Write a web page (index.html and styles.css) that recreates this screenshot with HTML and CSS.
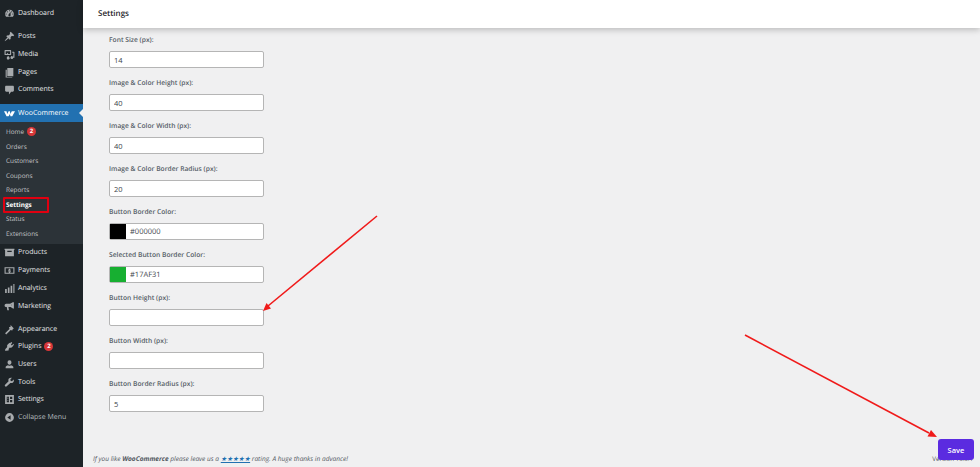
FILE: index.html

```html
<!DOCTYPE html>
<html lang="en">
<head>
  <meta charset="UTF-8" />
  <meta name="viewport" content="width=device-width, initial-scale=1.0"/>
  <title>Settings</title>
  <link rel="stylesheet" href="styles.css">
</head>
<body>
  <div class="wrap">
    <aside class="sidebar">
      <ul class="menu first">
        <li><svg viewBox="0 0 20 20"><path fill-rule="evenodd" d="M3.76 16h12.48c1.1-1.37 1.76-3.11 1.76-5 0-4.42-3.58-8-8-8s-8 3.58-8 8c0 1.89.66 3.63 1.76 5zM10 4c.55 0 1 .45 1 1s-.45 1-1 1-1-.45-1-1 .45-1 1-1zM6 6c.55 0 1 .45 1 1s-.45 1-1 1-1-.45-1-1 .45-1 1-1zm8 0c.55 0 1 .45 1 1s-.45 1-1 1-1-.45-1-1 .45-1 1-1zm-5.37 5.55L12 7v6c0 1.1-.9 2-2 2s-2-.9-2-2c0-.57.24-1.08.63-1.45zM4 10c.55 0 1 .45 1 1s-.45 1-1 1-1-.45-1-1 .45-1 1-1zm12 0c.55 0 1 .45 1 1s-.45 1-1 1-1-.45-1-1 .45-1 1-1z"/></svg>Dashboard</li>
      </ul>
      <ul class="menu">
        <li><svg viewBox="0 0 20 20"><path d="M10.44 3.02l1.82-1.82 6.36 6.35-1.83 1.82c-1.05-.68-2.48-.57-3.41.36l-.75.75c-.92.93-1.04 2.35-.35 3.41l-1.83 1.82-2.41-2.41-2.8 2.79c-.42.42-3.38 2.71-3.8 2.29s1.86-3.39 2.28-3.81l2.79-2.79L4.1 9.36l1.83-1.82c1.05.69 2.48.57 3.4-.36l.75-.75c.93-.92 1.05-2.35.36-3.41z"/></svg>Posts</li>
        <li><svg viewBox="0 0 20 20"><path fill-rule="evenodd" d="M2 2h10a1 1 0 0 1 1 1v7a1 1 0 0 1-1 1H2a1 1 0 0 1-1-1V3a1 1 0 0 1 1-1zm1 2v5h2l1-2 2 2h3V4H3zm12 1h3a1 1 0 0 1 1 1v10h-2.2a2.5 2.5 0 1 1-1-2.4H17V7h-2V5zM6 13h3v1.6a2.5 2.5 0 1 1-1.5-.4H6V13z"/></svg>Media</li>
        <li><svg viewBox="0 0 20 20"><path fill-rule="evenodd" d="M6 2h11v15H6V2zM3 5h2v13h10v1H3V5z"/></svg>Pages</li>
        <li><svg viewBox="0 0 20 20"><path d="M4 3h12c1.1 0 2 .9 2 2v7c0 1.1-.9 2-2 2h-3l-4 5v-5H4c-1.1 0-2-.9-2-2V5c0-1.1.9-2 2-2z"/></svg>Comments</li>
      </ul>
      <ul class="menu">
        <li class="active"><svg class="woo" viewBox="0 0 24 14"><path d="M0 2h5.500l1.500 6 3-6h3l1 6 3-6H24l-6 11h-4l-1-5-3 5H5.500z"/></svg>WooCommerce</li>
      </ul>
      <ul class="submenu">
        <li>Home <span class="badge">2</span></li>
        <li>Orders</li>
        <li>Customers</li>
        <li>Coupons</li>
        <li>Reports</li>
        <li class="current">Settings</li>
        <li>Status</li>
        <li>Extensions</li>
      </ul>
      <ul class="menu">
        <li><svg viewBox="0 0 20 20"><path fill-rule="evenodd" d="M1 3h18v2l-1 1v11H2V6L1 5V3zm5 4v2h8V7H6z"/></svg>Products</li>
        <li><svg viewBox="0 0 20 20"><path fill-rule="evenodd" d="M1 4h18v12H1V4zm2 2v8h14V6H3zm6 1h2v1h1v1H9.500v.5H12V13h-1v1H9v-1H8v-1h2.500v-.5H8V8h1V7z"/></svg>Payments</li>
        <li><svg viewBox="0 0 20 20"><path d="M2 11h3v7H2zM7 8h3v10H7zM12 5h3v13h-3zM17 2h2v16h-2z"/></svg>Analytics</li>
        <li><svg viewBox="0 0 20 20"><path fill-rule="evenodd" d="M17 2l1 1v10l-1 1-5-3H8l1 6H6l-1-6H4a3 3 0 0 1 0-6h7l6-3zm-3 4v3a2 2 0 0 0 0-3z"/></svg>Marketing</li>
      </ul>
      <ul class="menu">
        <li><svg viewBox="0 0 20 20"><path d="M12 2l6 6-2 1-1 3-3-1-2 2-6 6-2-2 6-6 2-2-1-3 3-1z"/></svg>Appearance</li>
        <li><svg viewBox="0 0 20 20"><path d="M13 2l2 1-2.500 4 2 1L17 5l1 2-3 4c-1 1.500-3 1.800-4.500 1L8 15l1 1-2 2-1-1c-1 .8-2 1-3 1l-1-1c0-1 .2-2 1-3l3-3c-.8-1.500-.5-3.500.8-4.500L10 3l1 1z"/></svg>Plugins <span class="badge">2</span></li>
        <li><svg viewBox="0 0 20 20"><path d="M10 2.500a3.600 3.600 0 0 1 3.600 3.800c0 2.200-1.500 4-3.600 4s-3.600-1.800-3.600-4A3.600 3.600 0 0 1 10 2.500zM3 14.500c0-1.500 2.500-2.800 4.500-3.300.7.700 1.600 1 2.500 1s1.800-.3 2.500-1c2 .5 4.500 1.800 4.500 3.300V17H3v-2.500z"/></svg>Users</li>
        <li><svg viewBox="0 0 20 20"><path d="M17.500 4.500l-3 3-2.500-.5-.5-2.500 3-3c-2-.7-4.200-.2-5.500 1.200C8 3.600 7.600 5.700 8.300 7.500L2 14c-.8.800-.8 2.200 0 3s2.200.8 3 0l6.500-6.300c1.800.7 3.900.3 5.300-1.200 1.400-1.300 1.400-3.500.7-5z"/></svg>Tools</li>
        <li><svg viewBox="0 0 20 20"><path fill-rule="evenodd" d="M2 2h16v16H2V2zm3 3v10h4V5H5zm6 0v4h4V5h-4zm0 6v4h4v-4h-4zM6 7h2v1H6V7zm0 4h2v1H6v-1z"/></svg>Settings</li>
        <li class="collapse"><svg viewBox="0 0 20 20"><path fill-rule="evenodd" d="M10 2a8 8 0 1 1 0 16 8 8 0 0 1 0-16zm2 4l-6 4 6 4V6z"/></svg>Collapse Menu</li>
      </ul>
    </aside>

    <div class="main">
      <header class="topbar">Settings</header>
      <form class="form">
        <div class="field">
          <label>Font Size (px):</label>
          <input type="text" value="14">
        </div>
        <div class="field">
          <label>Image &amp; Color Height (px):</label>
          <input type="text" value="40">
        </div>
        <div class="field">
          <label>Image &amp; Color Width (px):</label>
          <input type="text" value="40">
        </div>
        <div class="field">
          <label>Image &amp; Color Border Radius (px):</label>
          <input type="text" value="20">
        </div>
        <div class="field">
          <label>Button Border Color:</label>
          <div class="color-input"><span class="swatch black"></span>#000000</div>
        </div>
        <div class="field">
          <label>Selected Button Border Color:</label>
          <div class="color-input"><span class="swatch green"></span>#17AF31</div>
        </div>
        <div class="field">
          <label>Button Height (px):</label>
          <input type="text">
        </div>
        <div class="field">
          <label>Button Width (px):</label>
          <input type="text">
        </div>
        <div class="field">
          <label>Button Border Radius (px):</label>
          <input type="text" value="5">
        </div>
      </form>
      <footer class="footer">
        <span>If you like <strong>WooCommerce</strong> please leave us a <a href="#">★★★★★</a> rating. A huge thanks in advance!</span>
        <span class="version">Version 10.0.1</span>
      </footer>
    </div>
  </div>

  <!-- annotations on top of the screenshot -->
  <div class="highlight"></div>
  <svg class="arrows" viewBox="0 0 980 467">
    <g stroke="#f01a1a" stroke-width="1.600" fill="none">
      <path d="M377 216L268 306"/>
      <path d="M745 335L929 433"/>
    </g>
    <path fill="#f01a1a" d="M263 311l3.500-8 4.500 5.500z"/>
    <path fill="#f01a1a" d="M937 437l-9.500-.5 3.500-6.500z"/>
  </svg>
  <button class="save">Save</button>
</body>
</html>
```

FILE: styles.css

```css
html, body {
  margin: 0;
  height: 100%;
  overflow: hidden;
}
body {
  font-family: "Open Sans", sans-serif;
  background: #f0f0f1;
  color: #3c434a;
  font-size: 7px;
  text-rendering: geometricPrecision;
}
.wrap {
  display: flex;
  height: 467px;
}

/* sidebar */
.sidebar {
  width: 83px;
  flex: none;
  background: #1d2327;
  color: #e6e8ea;
  padding-top: 5px;
  box-sizing: border-box;
}
.sidebar ul {
  list-style: none;
  margin: 0;
  padding: 0;
}
.menu {
  margin-bottom: 5.400px !important;
}
.menu li {
  height: 17.700px;
  display: flex;
  align-items: center;
  gap: 3px;
  padding-left: 4px;
  position: relative;
}
.menu svg {
  width: 11px;
  height: 11px;
  fill: #a7aaad;
  flex: none;
}
.menu .woo {
  fill: #fff;
}
.menu .active {
  background: #2271b1;
  color: #fff;
}
.menu .active::after {
  content: "";
  position: absolute;
  right: 0;
  top: 5px;
  border: 4px solid transparent;
  border-right-color: #f0f0f1;
}
.menu .collapse {
  color: #b4b9be;
}
.submenu {
  background: #2c3338;
  padding: 2.700px 0 3.500px !important;
  margin-top: -5.400px !important;
  margin-bottom: 0 !important;
  color: #c3c4c7;
  font-size: 6.400px;
}
.submenu li {
  height: 14.500px;
  display: flex;
  align-items: center;
  gap: 3px;
  padding-left: 6px;
}
.submenu .current {
  color: #fff;
  font-weight: 700;
}
.badge {
  width: 9px;
  height: 9px;
  border-radius: 50%;
  background: #d63638;
  color: #fff;
  font-size: 6px;
  line-height: 9px;
  text-align: center;
  font-weight: 700;
}

/* content */
.main {
  flex: 1;
  min-width: 0;
  display: flex;
  flex-direction: column;
}
.topbar {
  height: 28px;
  flex: none;
  background: #fff;
  box-shadow: 0 2px 6px rgba(0, 0, 0, 0.22);
  font-size: 8px;
  font-weight: 600;
  color: #1d2327;
  line-height: 28px;
  padding-left: 15px;
}
.form {
  flex: 1;
  padding: 6px 0 0 26px;
}
.field {
  height: 43px;
}
.field label {
  display: block;
  height: 12px;
  line-height: 12px;
  margin-bottom: 5px;
  font-size: 6.700px;
  font-weight: 600;
  color: #555d66;
}
.field input, .color-input {
  width: 155px;
  height: 17px;
  box-sizing: border-box;
  border: 1px solid #b5b5b5;
  border-radius: 2px;
  background: #fff;
  padding: 0 4px;
  font-family: inherit;
  font-size: 7.500px;
  color: #3c434a;
  display: block;
  outline: none;
}
.color-input {
  display: flex;
  align-items: center;
  gap: 4px;
  padding: 0;
}
.swatch {
  width: 16px;
  height: 15px;
}
.swatch.black {
  background: #000;
}
.swatch.green {
  background: #17af31;
}
.footer {
  height: 16px;
  flex: none;
  display: flex;
  justify-content: space-between;
  padding: 0 7px 0 10px;
  font-size: 6.550px;
  font-style: italic;
  color: #50575e;
  line-height: 16px;
}
.footer a {
  color: #2271b1;
}
.version {
  font-style: normal;
  font-size: 6.200px;
}

/* annotations */
.highlight {
  position: absolute;
  left: 3px;
  top: 197px;
  width: 42px;
  height: 12px;
  border: 2px solid #e00010;
  border-radius: 1px;
}
.arrows {
  position: absolute;
  left: 0;
  top: 0;
  width: 980px;
  height: 467px;
  pointer-events: none;
}
.save {
  position: absolute;
  left: 938px;
  top: 439px;
  width: 36px;
  height: 21px;
  border: none;
  border-radius: 3px;
  background: #5b2be0;
  color: #fff;
  font-family: inherit;
  font-size: 7.500px;
  font-weight: 600;
  padding: 0;
}
```
